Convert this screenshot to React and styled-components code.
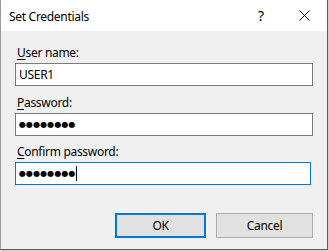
import React from "react";
import styled, { createGlobalStyle } from "styled-components";

const Global = createGlobalStyle`
  html, body { margin: 0; padding: 0; }
  body {
    background: #cfcfcf;
    font-family: "Segoe UI", "Noto Sans", "Open Sans", sans-serif;
    font-size: 12px;
    letter-spacing: -0.3px;
    color: #000;
  }
`;

const Window = styled.div`
  width: 328px;
  height: 250px;
  box-sizing: border-box;
  border-left: 1px solid #9a9a9a;
  border-right: 1px solid #5c5c5c;
  border-bottom: 1px solid #5c5c5c;
  display: flex;
  flex-direction: column;
  background: #f0f0f0;
`;

const TitleBar = styled.div`
  height: 31px;
  background: #fff;
  display: flex;
  align-items: center;
  padding-left: 8px;
`;

const Title = styled.div`
  flex: 1;
  font-size: 12px;
  line-height: 15px;
  margin-top: 1px;
`;

const CaptionButton = styled.div`
  width: ${(p) => p.$w}px;
  height: 31px;
  display: flex;
  align-items: center;
  justify-content: center;
  font-size: 14px;
`;

const Content = styled.div`
  flex: 1;
  display: flex;
  flex-direction: column;
  padding: 14px 0 0 14px;
`;

const Label = styled.div`
  margin-left: 2px;
  line-height: 15px;
  height: 15px;
  margin-top: ${(p) => p.$mt || 0}px;
  margin-bottom: 3px;
  & u { text-decoration-thickness: 1px; text-underline-offset: 2px; }
`;

const Field = styled.div`
  box-sizing: border-box;
  width: ${(p) => (p.$focused ? 296 : 298)}px;
  height: 23px;
  background: #fff;
  border: 1px solid ${(p) => (p.$focused ? "#0078d7" : "#7a7a7a")};
  display: flex;
  align-items: center;
  padding-left: 3px;
  font-size: 12px;
`;

const Dots = styled.span`
  font-family: "DejaVu Sans", sans-serif;
  font-size: 8px;
  letter-spacing: 0.1px;
  line-height: 10px;
`;

const Caret = styled.span`
  display: inline-block;
  width: 1px;
  height: 15px;
  background: #000;
  margin-left: 0px;
`;

const ButtonRow = styled.div`
  display: flex;
  gap: 10px;
  margin-top: 28px;
  margin-left: 100px;
`;

const Button = styled.div`
  box-sizing: border-box;
  width: ${(p) => p.$w}px;
  height: 25px;
  background: #e1e1e1;
  border: ${(p) => (p.$default ? "2px solid #0078d7" : "1px solid #adadad")};
  display: flex;
  align-items: center;
  justify-content: center;
`;

const CloseIcon = () => (
  <svg width="11" height="11" viewBox="0 0 11 11">
    <path d="M0.5 0.5 L10.5 10.5 M10.5 0.5 L0.5 10.5" stroke="#000" strokeWidth="1" />
  </svg>
);

export default function App() {
  return (
    <>
      <Global />
      <Window>
        <TitleBar>
          <Title>Set Credentials</Title>
          <CaptionButton $w={40}>?</CaptionButton>
          <CaptionButton $w={46}>
            <CloseIcon />
          </CaptionButton>
        </TitleBar>
        <Content>
          <Label>
            <u>U</u>ser name:
          </Label>
          <Field>USER1</Field>
          <Label $mt={9}>
            <u>P</u>assword:
          </Label>
          <Field>
            <Dots>●●●●●●●●</Dots>
          </Field>
          <Label $mt={8}>
            <u>C</u>onfirm password:
          </Label>
          <Field $focused>
            <Dots>●●●●●●●●</Dots>
            <Caret />
          </Field>
          <ButtonRow>
            <Button $w={91} $default>OK</Button>
            <Button $w={97}>Cancel</Button>
          </ButtonRow>
        </Content>
      </Window>
    </>
  );
}
